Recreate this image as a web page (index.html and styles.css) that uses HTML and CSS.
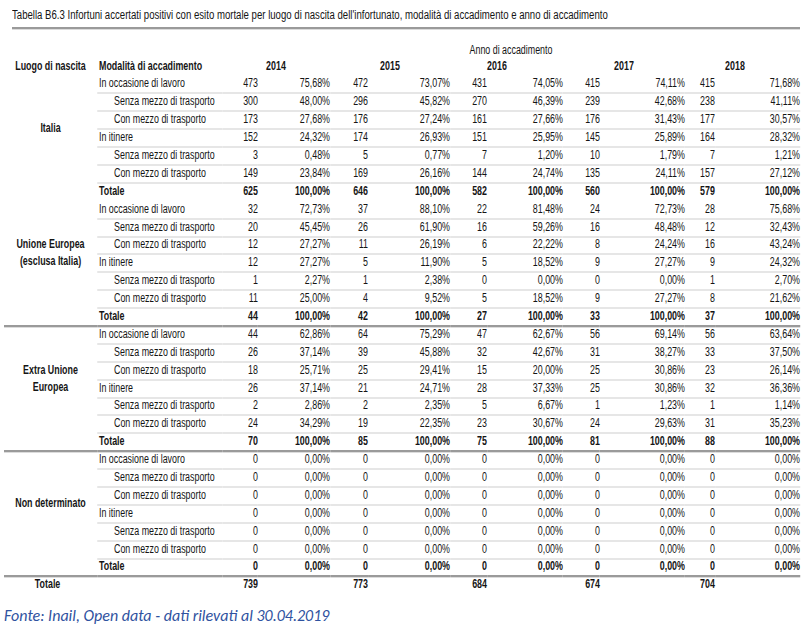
FILE: index.html
```html
<!DOCTYPE html>
<html lang="it">
<head>
<meta charset="utf-8">
<title>Tabella B6.3</title>
<link rel="stylesheet" href="styles.css">
</head>
<body>
<div class="page">
  <div class="title"><span class="title-text">Tabella B6.3 Infortuni accertati positivi con esito mortale per luogo di nascita dell'infortunato, modalità di accadimento e anno di accadimento</span></div>
  <table class="data">
    <colgroup>
      <col class="c-lab"><col class="c-mod">
      <col class="c-n14"><col class="c-p14">
      <col class="c-n15"><col class="c-p15">
      <col class="c-n16"><col class="c-p16">
      <col class="c-n17"><col class="c-p17">
      <col class="c-n18"><col class="c-p18">
    </colgroup>
    <thead>
      <tr class="anno"><th></th><th></th><th colspan="10" class="anno-t">Anno di accadimento</th></tr>
      <tr class="head">
        <th class="lab">Luogo di nascita</th>
        <th class="mod">Modalità di accadimento</th>
        <th colspan="2" class="yr">2014</th>
        <th colspan="2" class="yr">2015</th>
        <th colspan="2" class="yr y16">2016</th>
        <th colspan="2" class="yr">2017</th>
        <th colspan="2" class="yr y18">2018</th>
      </tr>
    </thead>
    <tbody>
      <tr><td class="lab" rowspan="6">Italia</td><td class="mod">In occasione di lavoro</td><td>473</td><td>75,68%</td><td>472</td><td>73,07%</td><td>431</td><td>74,05%</td><td>415</td><td>74,11%</td><td>415</td><td>71,68%</td></tr>
      <tr class="ln"><td class="mod sub">Senza mezzo di trasporto</td><td>300</td><td>48,00%</td><td>296</td><td>45,82%</td><td>270</td><td>46,39%</td><td>239</td><td>42,68%</td><td>238</td><td>41,11%</td></tr>
      <tr class="ln"><td class="mod sub">Con mezzo di trasporto</td><td>173</td><td>27,68%</td><td>176</td><td>27,24%</td><td>161</td><td>27,66%</td><td>176</td><td>31,43%</td><td>177</td><td>30,57%</td></tr>
      <tr class="ln"><td class="mod">In itinere</td><td>152</td><td>24,32%</td><td>174</td><td>26,93%</td><td>151</td><td>25,95%</td><td>145</td><td>25,89%</td><td>164</td><td>28,32%</td></tr>
      <tr class="ln"><td class="mod sub">Senza mezzo di trasporto</td><td>3</td><td>0,48%</td><td>5</td><td>0,77%</td><td>7</td><td>1,20%</td><td>10</td><td>1,79%</td><td>7</td><td>1,21%</td></tr>
      <tr class="ln"><td class="mod sub">Con mezzo di trasporto</td><td>149</td><td>23,84%</td><td>169</td><td>26,16%</td><td>144</td><td>24,74%</td><td>135</td><td>24,11%</td><td>157</td><td>27,12%</td></tr>
      <tr class="ln tot"><td class="lab"></td><td class="mod">Totale</td><td>625</td><td>100,00%</td><td>646</td><td>100,00%</td><td>582</td><td>100,00%</td><td>560</td><td>100,00%</td><td>579</td><td>100,00%</td></tr>

      <tr><td class="lab" rowspan="6">Unione Europea<br>(esclusa Italia)</td><td class="mod">In occasione di lavoro</td><td>32</td><td>72,73%</td><td>37</td><td>88,10%</td><td>22</td><td>81,48%</td><td>24</td><td>72,73%</td><td>28</td><td>75,68%</td></tr>
      <tr class="ln"><td class="mod sub">Senza mezzo di trasporto</td><td>20</td><td>45,45%</td><td>26</td><td>61,90%</td><td>16</td><td>59,26%</td><td>16</td><td>48,48%</td><td>12</td><td>32,43%</td></tr>
      <tr class="ln"><td class="mod sub">Con mezzo di trasporto</td><td>12</td><td>27,27%</td><td>11</td><td>26,19%</td><td>6</td><td>22,22%</td><td>8</td><td>24,24%</td><td>16</td><td>43,24%</td></tr>
      <tr class="ln"><td class="mod">In itinere</td><td>12</td><td>27,27%</td><td>5</td><td>11,90%</td><td>5</td><td>18,52%</td><td>9</td><td>27,27%</td><td>9</td><td>24,32%</td></tr>
      <tr class="ln"><td class="mod sub">Senza mezzo di trasporto</td><td>1</td><td>2,27%</td><td>1</td><td>2,38%</td><td>0</td><td>0,00%</td><td>0</td><td>0,00%</td><td>1</td><td>2,70%</td></tr>
      <tr class="ln"><td class="mod sub">Con mezzo di trasporto</td><td>11</td><td>25,00%</td><td>4</td><td>9,52%</td><td>5</td><td>18,52%</td><td>9</td><td>27,27%</td><td>8</td><td>21,62%</td></tr>
      <tr class="ln tot"><td class="lab"></td><td class="mod">Totale</td><td>44</td><td>100,00%</td><td>42</td><td>100,00%</td><td>27</td><td>100,00%</td><td>33</td><td>100,00%</td><td>37</td><td>100,00%</td></tr>

      <tr class="sep"><td class="lab" rowspan="6">Extra Unione<br>Europea</td><td class="mod">In occasione di lavoro</td><td>44</td><td>62,86%</td><td>64</td><td>75,29%</td><td>47</td><td>62,67%</td><td>56</td><td>69,14%</td><td>56</td><td>63,64%</td></tr>
      <tr class="ln"><td class="mod sub">Senza mezzo di trasporto</td><td>26</td><td>37,14%</td><td>39</td><td>45,88%</td><td>32</td><td>42,67%</td><td>31</td><td>38,27%</td><td>33</td><td>37,50%</td></tr>
      <tr class="ln"><td class="mod sub">Con mezzo di trasporto</td><td>18</td><td>25,71%</td><td>25</td><td>29,41%</td><td>15</td><td>20,00%</td><td>25</td><td>30,86%</td><td>23</td><td>26,14%</td></tr>
      <tr class="ln"><td class="mod">In itinere</td><td>26</td><td>37,14%</td><td>21</td><td>24,71%</td><td>28</td><td>37,33%</td><td>25</td><td>30,86%</td><td>32</td><td>36,36%</td></tr>
      <tr class="ln"><td class="mod sub">Senza mezzo di trasporto</td><td>2</td><td>2,86%</td><td>2</td><td>2,35%</td><td>5</td><td>6,67%</td><td>1</td><td>1,23%</td><td>1</td><td>1,14%</td></tr>
      <tr class="ln"><td class="mod sub">Con mezzo di trasporto</td><td>24</td><td>34,29%</td><td>19</td><td>22,35%</td><td>23</td><td>30,67%</td><td>24</td><td>29,63%</td><td>31</td><td>35,23%</td></tr>
      <tr class="ln tot"><td class="lab"></td><td class="mod">Totale</td><td>70</td><td>100,00%</td><td>85</td><td>100,00%</td><td>75</td><td>100,00%</td><td>81</td><td>100,00%</td><td>88</td><td>100,00%</td></tr>

      <tr class="sep"><td class="lab" rowspan="6">Non determinato</td><td class="mod">In occasione di lavoro</td><td>0</td><td>0,00%</td><td>0</td><td>0,00%</td><td>0</td><td>0,00%</td><td>0</td><td>0,00%</td><td>0</td><td>0,00%</td></tr>
      <tr class="ln"><td class="mod sub">Senza mezzo di trasporto</td><td>0</td><td>0,00%</td><td>0</td><td>0,00%</td><td>0</td><td>0,00%</td><td>0</td><td>0,00%</td><td>0</td><td>0,00%</td></tr>
      <tr class="ln"><td class="mod sub">Con mezzo di trasporto</td><td>0</td><td>0,00%</td><td>0</td><td>0,00%</td><td>0</td><td>0,00%</td><td>0</td><td>0,00%</td><td>0</td><td>0,00%</td></tr>
      <tr class="ln"><td class="mod">In itinere</td><td>0</td><td>0,00%</td><td>0</td><td>0,00%</td><td>0</td><td>0,00%</td><td>0</td><td>0,00%</td><td>0</td><td>0,00%</td></tr>
      <tr class="ln"><td class="mod sub">Senza mezzo di trasporto</td><td>0</td><td>0,00%</td><td>0</td><td>0,00%</td><td>0</td><td>0,00%</td><td>0</td><td>0,00%</td><td>0</td><td>0,00%</td></tr>
      <tr class="ln"><td class="mod sub">Con mezzo di trasporto</td><td>0</td><td>0,00%</td><td>0</td><td>0,00%</td><td>0</td><td>0,00%</td><td>0</td><td>0,00%</td><td>0</td><td>0,00%</td></tr>
      <tr class="ln tot"><td class="lab"></td><td class="mod">Totale</td><td>0</td><td>0,00%</td><td>0</td><td>0,00%</td><td>0</td><td>0,00%</td><td>0</td><td>0,00%</td><td>0</td><td>0,00%</td></tr>

      <tr class="sep tot grand"><td class="lab">Totale</td><td class="mod"></td><td>739</td><td></td><td>773</td><td></td><td>684</td><td></td><td>674</td><td></td><td>704</td><td></td></tr>
    </tbody>
  </table>
  <div class="source">Fonte: Inail, Open data - dati rilevati al 30.04.2019</div>
</div>
</body>
</html>
```

FILE: styles.css
```css
html, body {
  margin: 0;
  padding: 0;
  background: #ffffff;
}

body {
  font-family: "Liberation Sans", Arial, sans-serif;
  color: #151515;
}

.page {
  width: 810px;
  height: 642px;
  padding: 0 10px 0 4px;
  box-sizing: border-box;
  overflow: hidden;
}

/* Title: Arial Narrow look obtained by horizontal compression */
.title {
  margin-left: 8px;
  padding-top: 8px;
  padding-bottom: 5px;
  font-size: 12px;
  line-height: 14px;
  white-space: nowrap;
  border-bottom: 2px solid #9a9a9a;
  box-shadow: 0 1px 0 #dcdcdc;
}

.title-text {
  display: inline-block;
  transform: scaleX(0.8);
  transform-origin: 0 0;
}

/* Table: laid out at 1/0.74 width, then compressed to look like a narrow font */
.data {
  margin-top: 13.5px;
  width: 1075.67px;
  table-layout: fixed;
  border-collapse: separate;
  border-spacing: 0;
  font-size: 12px;
  transform: scaleX(0.74);
  transform-origin: 0 0;
}

.c-lab { width: 125.68px; }
.c-mod { width: 168.92px; }
.c-n14 { width: 48.65px; }
.c-p14 { width: 97.30px; }
.c-n15 { width: 51.35px; }
.c-p15 { width: 110.81px; }
.c-n16 { width: 50px; }
.c-p16 { width: 102.70px; }
.c-n17 { width: 50px; }
.c-p17 { width: 114.86px; }
.c-n18 { width: 40.54px; }
.c-p18 { width: 114.86px; }

.data th,
.data td {
  padding: 0;
  white-space: nowrap;
  line-height: 14px;
}

.anno th {
  height: 12px;
  font-weight: normal;
}

.anno-t {
  text-align: center;
}

.head th {
  height: 18px;
  font-weight: bold;
  text-align: center;
}

.head th.mod {
  text-align: left;
  padding-left: 2.7px;
}

.head .y16 { padding-right: 25.7px; }
.head .y18 { padding-right: 20.3px; }

.data tbody tr {
  height: 17.9px;
}

.data tbody td {
  text-align: right;
  vertical-align: middle;
}

.data tbody td.lab {
  text-align: center;
  font-weight: bold;
  line-height: 17px;
}

.data tbody td.mod {
  text-align: left;
  padding-left: 2.7px;
}

.data tbody td.sub {
  padding-left: 23px;
}

.tot td {
  font-weight: bold;
}

.ln td:not(.lab) {
  background: linear-gradient(#e6e6e6, #e6e6e6) top left / 100% 2px no-repeat;
}

.sep td {
  background: linear-gradient(#9a9a9a, #9a9a9a) 0 0 / 100% 2px no-repeat,
              linear-gradient(#dcdcdc, #dcdcdc) 0 2px / 100% 1px no-repeat;
}

.grand td.lab {
  padding-right: 8px;
}

.source {
  margin-top: 14px;
  font-family: Carlito, "Open Sans", "Liberation Sans", sans-serif;
  font-style: italic;
  font-size: 16px;
  line-height: 18px;
  color: #2f52a0;
}
```
